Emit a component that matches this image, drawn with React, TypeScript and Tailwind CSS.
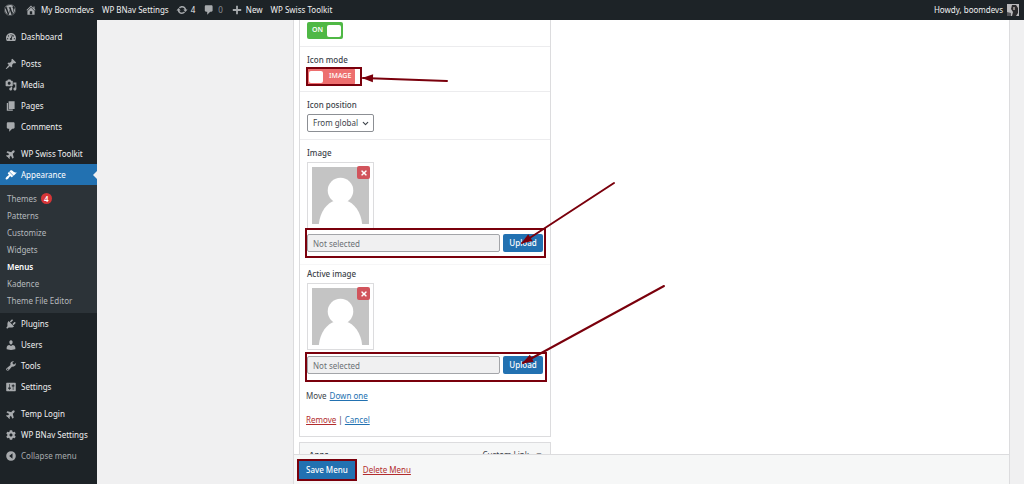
import React from 'react';
import { ChevronDown } from 'lucide-react';
import { FaCog, FaPlane, FaTachometerAlt, FaTimes, FaWordpress } from 'react-icons/fa';

const PATHS = {
  post: 'M10.44 3.02l1.82-1.82 6.36 6.35-1.83 1.82c-1.05-.68-2.48-.57-3.41.36l-.75.75c-.92.93-1.04 2.35-.35 3.41l-1.83 1.82-2.41-2.41-2.8 2.79c-.42.42-3.38 2.71-3.8 2.29s1.86-3.39 2.28-3.81l2.79-2.79L4.1 9.36l1.83-1.82c1.05.69 2.48.57 3.4-.36l.75-.75c.93-.92 1.05-2.35.36-3.41z',
  media: 'M13 11V4c0-.55-.45-1-1-1h-1.67L9 1H5L3.67 3H2c-.55 0-1 .45-1 1v7c0 .55.45 1 1 1h10c.55 0 1-.45 1-1zM7 4.5c1.38 0 2.5 1.12 2.5 2.5S8.38 9.5 7 9.5 4.5 8.38 4.5 7 5.62 4.5 7 4.5zM14 6h5v10.5c0 1.38-1.12 2.5-2.5 2.5S14 17.88 14 16.5s1.12-2.5 2.5-2.5c.17 0 .34.02.5.05V9h-3V6zm-4 8.05V13h2v3.5c0 1.38-1.12 2.5-2.5 2.5S7 17.88 7 16.5 8.12 14 9.5 14c.17 0 .34.02.5.05z',
  page: 'M6 15V2h10v13H6zm-1 1h8v2H3V5h2v11z',
  comment: 'M5 2h9c1.1 0 2 .9 2 2v7c0 1.1-.9 2-2 2h-2l-5 5v-5H5c-1.1 0-2-.9-2-2V4c0-1.1.9-2 2-2z',
  brush: 'M14.48 11.06L7.41 3.99l1.5-1.5c.5-.56 2.3-.47 3.51.32 1.21.8 1.43 1.28 2.91 2.1 1.18.64 2.45 1.26 4.45.85zm-.71.71L6.7 4.7 4.93 6.47c-.39.39-.39 1.02 0 1.41l1.06 1.06c.39.39.39 1.03 0 1.42-.6.6-1.43 1.11-2.21 1.69-.35.26-.7.53-1.01.84C1.43 14.23.4 16.08 1.4 17.07c.99 1 2.84-.03 4.18-1.36.31-.31.58-.66.85-1.02.57-.78 1.08-1.61 1.69-2.21.39-.39 1.02-.39 1.41 0l1.06 1.06c.39.39 1.02.39 1.41 0z',
  plugin: 'M13.11 4.36L9.87 7.6 8 5.73l3.24-3.24c.35-.34 1.05-.2 1.56.32.52.51.66 1.21.31 1.55zm-8 1.77l.91-1.12 9.01 9.01-1.19.84c-.71.71-2.63 1.16-3.82 1.16H6.14L4.9 17.26c-.59.59-1.54.59-2.12 0-.59-.58-.59-1.53 0-2.12l1.24-1.24v-3.88c0-1.13.4-3.19 1.09-3.89zm7.26 3.97l3.24-3.24c.34-.35 1.04-.21 1.55.31.52.51.66 1.21.31 1.55l-3.24 3.25z',
  user: 'M10 9.25c-2.27 0-2.73-3.44-2.73-3.44C7 4.02 7.82 2 9.97 2c2.16 0 2.98 2.02 2.71 3.81 0 0-.41 3.44-2.68 3.44zm0 2.57L12.72 10c2.39 0 4.52 2.33 4.52 4.53v2.49s-3.65 1.13-7.24 1.13c-3.65 0-7.24-1.13-7.24-1.13v-2.49c0-2.25 1.94-4.48 4.47-4.48z',
  wrench: 'M16.68 9.77c-1.34 1.34-3.3 1.67-4.95.99l-5.41 6.52c-.99.99-2.59.99-3.58 0s-.99-2.59 0-3.57l6.52-5.42c-.68-1.65-.35-3.61.99-4.95 1.28-1.28 3.12-1.62 4.72-1.06l-2.89 2.89 2.82 2.82 2.86-2.87c.53 1.58.18 3.39-1.08 4.65zM3.81 16.21c.4.39 1.04.39 1.43 0 .4-.4.4-1.04 0-1.43-.39-.4-1.03-.4-1.43 0-.39.39-.39 1.03 0 1.43z',
  settings: 'M18 16V4c0-.55-.45-1-1-1H3c-.55 0-1 .45-1 1v12c0 .55.45 1 1 1h14c.55 0 1-.45 1-1zM8 11h1c.55 0 1 .45 1 1s-.45 1-1 1H8v1.5c0 .28-.22.5-.5.5s-.5-.22-.5-.5V13H6c-.55 0-1-.45-1-1s.45-1 1-1h1V5.5c0-.28.22-.5.5-.5s.5.22.5.5V11zm5-2h-1c-.55 0-1-.45-1-1s.45-1 1-1h1V5.5c0-.28.22-.5.5-.5s.5.22.5.5V7h1c.55 0 1 .45 1 1s-.45 1-1 1h-1v5.5c0 .28-.22.5-.5.5s-.5-.22-.5-.5V9z',
  home: 'M16 8.5l1.53 1.53-1.06 1.06L10 4.6l-6.47 6.47-1.06-1.06L10 2.47l4 4V4h2v4.5zm-6-2.46l6 5.99V18H4v-5.97zM12 17v-5H8v5h4z',
  update: 'M10.2 3.28c3.53 0 6.43 2.61 6.92 6h2.08l-3.5 4-3.5-4h2.32c-.45-1.97-2.21-3.45-4.32-3.45-1.45 0-2.73.71-3.54 1.78L4.95 5.66C6.23 4.2 8.11 3.28 10.2 3.28zm-.4 13.44c-3.52 0-6.43-2.61-6.92-6H.8l3.5-4c1.17 1.33 2.33 2.67 3.5 4H5.48c.45 1.97 2.21 3.45 4.32 3.45 1.45 0 2.73-.71 3.54-1.78l1.71 1.95c-1.28 1.46-3.15 2.38-5.25 2.38z',
  plus: 'M17 8.5v3h-5.5V17h-3v-5.5H3v-3h5.5V3h3v5.5H17z',
  collapse: 'M10 2a8 8 0 1 0 0 16 8 8 0 0 0 0-16zm2.5 3.5v9L7 10z',
};

const Icon: React.FC<{ name: keyof typeof PATHS; className?: string }> = ({ name, className = 'size-3' }) => (
  <svg viewBox="0 0 20 20" fill="currentColor" fillRule="evenodd" className={className} aria-hidden="true">
    <path d={PATHS[name]} />
  </svg>
);

const plane = <FaPlane className="size-[10px] -rotate-45" />;

const MENU_GROUPS = [
  [{ label: 'Dashboard', icon: <FaTachometerAlt className="size-[10px]" /> }],
  [
    { label: 'Posts', icon: <Icon name="post" /> },
    { label: 'Media', icon: <Icon name="media" /> },
    { label: 'Pages', icon: <Icon name="page" /> },
    { label: 'Comments', icon: <Icon name="comment" /> },
  ],
  [
    { label: 'WP Swiss Toolkit', icon: plane },
    { label: 'Appearance', icon: <Icon name="brush" />, active: true },
    { label: 'Plugins', icon: <Icon name="plugin" /> },
    { label: 'Users', icon: <Icon name="user" /> },
    { label: 'Tools', icon: <Icon name="wrench" /> },
    { label: 'Settings', icon: <Icon name="settings" /> },
  ],
  [
    { label: 'Temp Login', icon: plane },
    { label: 'WP BNav Settings', icon: <FaCog className="size-[10px]" /> },
  ],
] as { label: string; icon: React.ReactNode; active?: boolean }[][];

const SUBMENU = ['Themes', 'Patterns', 'Customize', 'Widgets', 'Menus', 'Kadence', 'Theme File Editor'];

const AdminBar = () => (
  <header className="flex h-5 shrink-0 items-center bg-[#1d2327] pl-1 pr-[5px] text-[8px] text-[#f0f0f1]">
    <a href="#" aria-label="About WordPress" className="text-[#a7aaad]"><FaWordpress className="size-3" /></a>
    <a href="#" className="ml-[9px] flex items-center gap-1">
      <Icon name="home" className="size-3 text-[#a7aaad]" />My Boomdevs
    </a>
    <a href="#" className="ml-2">WP BNav Settings</a>
    <a href="#" className="ml-[7px] flex items-center gap-[3px]">
      <Icon name="update" className="size-3 text-[#a7aaad]" />4
    </a>
    <a href="#" className="ml-2 flex items-center gap-[3px] text-[#8c8f94]">
      <Icon name="comment" className="size-3 text-[#a7aaad]" />0
    </a>
    <a href="#" className="ml-2 flex items-center gap-[3px]">
      <Icon name="plus" className="size-3 text-[#a7aaad]" />New
    </a>
    <a href="#" className="ml-2">WP Swiss Toolkit</a>
    <a href="#" className="ml-auto flex items-center gap-1">
      Howdy, boomdevs
      <svg viewBox="0 0 12 12" className="size-3" aria-hidden="true">
        <rect width="12" height="12" fill="#b9b9bb" />
        <path d="M5 1h4l2 3v5l-2 3H5l1-4-2-3z" fill="#2b2b2d" />
        <path d="M6 3h2v3H6z" fill="#8d8784" />
        <path d="M0 8l4 1v3H0z" fill="#55565a" />
      </svg>
    </a>
  </header>
);

const Submenu = () => (
  <ul className="bg-[#2c3338] pb-1 pt-[5px] text-[#b5b9bd]">
    {SUBMENU.map((item) => (
      <li key={item}>
        <a href="#" className={`flex h-[17px] items-center gap-1 pl-[7px] ${item === 'Menus' ? 'font-semibold text-white' : ''}`}>
          {item}
          {item === 'Themes' && (
            <span className="flex size-[11px] items-center justify-center rounded-full bg-[#d63638] font-semibold text-white">4</span>
          )}
        </a>
      </li>
    ))}
  </ul>
);

const Sidebar = () => (
  <nav className="flex w-[97px] shrink-0 flex-col gap-1.5 overflow-hidden bg-[#1d2327] pt-[6px] text-[8px] text-[#f0f0f1]">
    {MENU_GROUPS.map((group, i) => (
      <ul key={i}>
        {group.map(({ label, icon, active }) => (
          <li key={label}>
            <a href="#" className={`relative flex h-[21px] items-center gap-1 whitespace-nowrap pl-[5px] ${active ? 'bg-[#2271b1] text-white' : ''}`}>
              <span className={`flex w-3 justify-center ${active ? '' : 'text-[#a7aaad]'}`}>{icon}</span>
              {label}
              {active && <span className="absolute right-0 border-y-4 border-r-4 border-y-transparent border-r-[#f0f0f1]" />}
            </a>
            {active && <Submenu />}
          </li>
        ))}
        {i === MENU_GROUPS.length - 1 && (
          <li>
            <button type="button" className="flex h-[21px] items-center gap-1 pl-[5px] text-[#a7aaad]">
              <Icon name="collapse" />Collapse menu
            </button>
          </li>
        )}
      </ul>
    ))}
  </nav>
);

// Dark red frame drawn over the highlighted control
const Highlight = ({ className }: { className: string }) => (
  <span className={`pointer-events-none absolute border-[#7a000c] ${className}`} />
);

interface ArrowProps {
  width: number;
  height: number;
  from: [number, number];
  to: [number, number];
  className: string;
}

const Arrow = ({ width, height, from, to, className }: ArrowProps) => {
  const angle = (Math.atan2(to[1] - from[1], to[0] - from[0]) * 180) / Math.PI;
  return (
    <svg width={width} height={height} className={`pointer-events-none absolute z-10 max-w-none ${className}`} aria-hidden="true">
      <line x1={from[0]} y1={from[1]} x2={to[0]} y2={to[1]} stroke="#7a000c" strokeWidth="2" strokeLinecap="round" />
      <path d="M1 0L-10 -4V4z" fill="#7a000c" transform={`translate(${to[0]} ${to[1]}) rotate(${angle})`} />
    </svg>
  );
};

interface UploadFieldProps {
  id: string;
  label: string;
  frame: string;
  gap: string;
  arrow: React.ReactNode;
}

const UploadField = ({ id, label, frame, gap, arrow }: UploadFieldProps) => (
  <>
    <label htmlFor={id} className="block h-3 font-medium leading-3">{label}</label>
    <div className="relative mt-[3px] size-[67px] border border-[#dcdcde] bg-white p-1">
      <svg viewBox="0 0 58 58" className="size-full bg-[#c4c4c4]" aria-hidden="true">
        <circle cx="29" cy="24" r="13" fill="#fff" />
        <path d="M7 58c1-12 8-22 17-24h10c9 2 16 12 17 24z" fill="#fff" />
      </svg>
      <button type="button" aria-label={`Remove ${label.toLowerCase()}`} className="absolute right-[3px] top-[3px] flex size-[13px] items-center justify-center rounded-xs bg-[#d1545c] text-white">
        <FaTimes className="size-2" />
      </button>
    </div>
    <div className={`relative flex gap-[3px] ${gap}`}>
      <input id={id} readOnly placeholder="Not selected" className="h-[18px] min-w-0 flex-1 rounded-xs border border-[#a3a5a9] bg-[#f0f0f1] px-[5px] text-[8px] placeholder:text-[#6c7075]" />
      <button type="button" className="h-[18px] w-10 rounded-xs bg-[#2271b1] font-medium text-white">Upload</button>
      <Highlight className={frame} />
      {arrow}
    </div>
  </>
);

const MenuItemCard = () => (
  <section className="border-x border-b border-[#dcdcde] bg-white">
    <div className="h-[27px] border-b border-[#ececee] px-[7px] pt-[2px]">
      <button type="button" role="switch" aria-checked="true" aria-label="Enable" className="flex h-[17px] w-9 items-center justify-between rounded-xs bg-[#4fb845] pl-[5px] pr-[2px] text-[7px] font-semibold text-white">
        ON<span className="h-3 w-[14px] rounded-xs bg-white" />
      </button>
    </div>
    <div className="h-[45px] border-b border-[#ececee] px-[7px] pt-[7px]">
      <span id="icon-mode" className="block h-3 font-medium leading-3">Icon mode</span>
      <div className="relative mt-[2px] flex w-12">
        <button type="button" role="switch" aria-checked="false" aria-labelledby="icon-mode" className="flex h-[17px] w-12 items-center gap-[6px] rounded-xs bg-[#ed6f6f] pl-[2px] text-[7px] font-medium text-white">
          <span className="h-3 w-[14px] rounded-xs bg-white" />IMAGE
        </button>
        <Highlight className="-left-px -right-[7px] -inset-y-px border-2" />
        <Arrow width={90} height={20} from={[86, 13]} to={[2, 10]} className="left-[54px] top-0" />
      </div>
    </div>
    <div className="h-12 border-b border-[#ececee] px-[7px] pt-[7px]">
      <label htmlFor="icon-position" className="block h-3 font-medium leading-3">Icon position</label>
      <div className="relative mt-[3px] flex w-[67px] items-center">
        <select id="icon-position" className="h-[18px] w-full appearance-none rounded-xs border border-[#8c8f94] bg-white pl-[5px] text-[8px] text-[#3c434a]">
          <option>From global</option>
        </select>
        <ChevronDown className="pointer-events-none absolute right-1 size-[9px]" strokeWidth={3} />
      </div>
    </div>
    <div className="h-[125px] border-b border-[#f6f6f7] px-[7px] pt-[7px]">
      <UploadField
        id="image"
        label="Image"
        gap="mt-[5px]"
        frame="-left-[2px] -right-[3px] -top-[6px] -bottom-[6px] border-2"
        arrow={<Arrow width={100} height={75} from={[95, 3]} to={[3, 63]} className="-right-[76px] -top-[54px]" />}
      />
    </div>
    <div className="px-[7px] pt-[3px]">
      <UploadField
        id="active-image"
        label="Active image"
        gap="mt-[6px]"
        frame="-left-[2px] -right-[4px] -top-[4px] -bottom-[8px] border-2"
        arrow={<Arrow width={150} height={90} from={[145, 3]} to={[4, 80]} className="-right-[126px] -top-[73px]" />}
      />
    </div>
    <p className="mt-4 px-[6px] leading-3">
      Move <a href="#" className="ml-px text-[#2271b1] underline">Down one</a>
    </p>
    <p className="mt-3 px-[6px] pb-[10px] leading-3">
      <a href="#" className="text-[#b32d2e] underline">Remove</a> | <a href="#" className="text-[#2271b1] underline">Cancel</a>
    </p>
  </section>
);

export default function App() {
  return (
    <div className="flex h-screen flex-col overflow-hidden bg-[#f0f0f1] font-['Noto_Sans','Open_Sans',sans-serif]">
      <AdminBar />
      <div className="flex min-h-0 flex-1">
        <Sidebar />
        <main className="ml-[196px] mr-[14px] flex min-w-0 flex-1 flex-col border-x border-[#dcdcde] bg-white text-[8px] text-[#3c434a]">
          <div className="min-h-0 flex-1 overflow-hidden pl-[5px]">
            <div className="w-[252px]">
              <MenuItemCard />
              <section className="mt-[5px] flex h-[25px] items-center justify-between border border-[#dcdcde] bg-[#f6f7f7] px-[7px]">
                <span className="pl-[2px] font-semibold">Apps</span>
                <span>Custom Link <span className="ml-1">▼</span></span>
              </section>
            </div>
          </div>
          <footer className="flex h-[30px] shrink-0 items-center gap-[6px] border-t border-[#dcdcde] bg-[#f6f7f7] pl-[3px]">
            <button type="button" className="h-[22px] border-2 border-[#7a000c] bg-[#2271b1] px-[7px] font-medium text-white">Save Menu</button>
            <a href="#" className="text-[#b32d2e] underline">Delete Menu</a>
          </footer>
        </main>
      </div>
    </div>
  );
}
